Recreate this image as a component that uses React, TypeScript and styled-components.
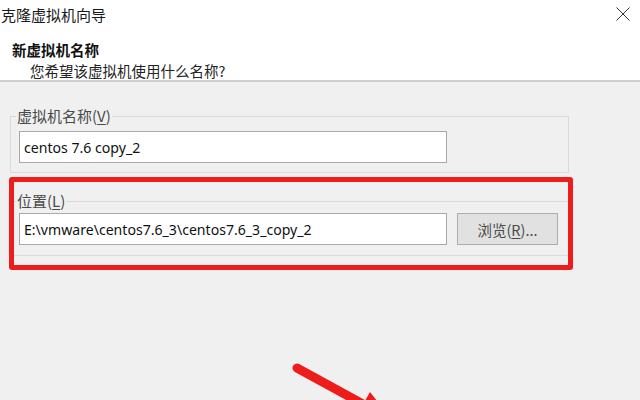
import React from "react";
import styled, { createGlobalStyle } from "styled-components";

const Global = createGlobalStyle`
  html, body { margin: 0; padding: 0; background: #f0f0f0; }
  body { font-family: "Noto Sans", "Noto Sans CJK SC", sans-serif; }
`;

const Window = styled.div`
  position: relative;
  width: 640px;
  height: 400px;
  overflow: hidden;
  background: #f0f0f0;
  display: flex;
  flex-direction: column;
`;

const TitleBar = styled.div`
  height: 30px;
  flex: none;
  background: #fff;
  display: flex;
  align-items: center;
  justify-content: space-between;
  padding: 0 10px 0 1px;
  box-sizing: border-box;
`;

const Title = styled.span`
  font-family: "Noto Sans CJK SC", sans-serif;
  font-size: 15px;
  color: #1a1a1a;
  line-height: 20px;
`;

const CloseButton = styled.svg`
  width: 14px;
  height: 14px;
  margin-top: -2px;
`;

const Header = styled.div`
  height: 40px;
  flex: none;
  background: #fff;
  border-bottom: 2px solid #cfcfcf;
  padding: 10px 0 0 12px;
  box-sizing: content-box;
  display: flex;
  flex-direction: column;
`;

const Heading = styled.div`
  font-family: "Noto Sans CJK SC", sans-serif;
  font-weight: 700;
  font-size: 14.5px;
  line-height: 20px;
  color: #111;
`;

const Subtitle = styled.div`
  font-family: "Noto Sans CJK SC", sans-serif;
  font-size: 14.5px;
  line-height: 20px;
  color: #222;
  padding-left: 18px;
  margin-top: 1px;
`;

const Body = styled.div`
  flex: 1;
  display: flex;
  flex-direction: column;
  padding-left: 10px;
`;

const Group = styled.fieldset<{ $top: number; $padTop: number; $padBottom: number }>`
  margin: ${(p) => p.$top}px 0 0 0;
  width: 559px;
  box-sizing: border-box;
  border: 1px solid #dadada;
  padding: ${(p) => p.$padTop}px 8px ${(p) => p.$padBottom}px 8px;
  min-width: 0;
`;

const Legend = styled.legend`
  font-family: "Noto Sans CJK SC", sans-serif;
  font-size: 15px;
  line-height: 18px;
  color: #4a4a4a;
  padding: 0 1px;
  margin-left: -3px;
`;

const Key = styled.span`
  text-decoration: underline;
  text-underline-offset: 2px;
`;

const Row = styled.div`
  display: flex;
  align-items: center;
  gap: 10px;
`;

const TextBox = styled.div`
  width: 428px;
  height: 32px;
  box-sizing: border-box;
  background: #fff;
  border: 1px solid #a9a9a9;
  padding: 0 4px;
  display: flex;
  align-items: center;
  font-family: "Noto Sans", sans-serif;
  font-size: 14.1px;
  color: #111;
  white-space: nowrap;
`;

const Button = styled.div`
  width: 101px;
  height: 32px;
  box-sizing: border-box;
  background: #e1e1e1;
  border: 1px solid #adadad;
  display: flex;
  align-items: center;
  justify-content: center;
  font-family: "Noto Sans CJK SC", sans-serif;
  font-size: 14.5px;
  color: #4a4a4a;
`;

const Highlight = styled.div`
  position: absolute;
  left: 9px;
  top: 177px;
  width: 564px;
  height: 93px;
  box-sizing: border-box;
  border: 5px solid #ec1d1b;
  border-radius: 3px;
  pointer-events: none;
`;

const Arrow = styled.svg`
  position: absolute;
  left: 0;
  top: 0;
  width: 640px;
  height: 400px;
  pointer-events: none;
`;

export default function App() {
  return (
    <>
      <Global />
      <Window>
        <TitleBar>
          <Title>克隆虚拟机向导</Title>
          <CloseButton viewBox="0 0 14 14">
            <path d="M0.5 0.5 L13.5 13.5 M13.5 0.5 L0.5 13.5" stroke="#333" strokeWidth="1" fill="none" />
          </CloseButton>
        </TitleBar>
        <Header>
          <Heading>新虚拟机名称</Heading>
          <Subtitle>您希望该虚拟机使用什么名称?</Subtitle>
        </Header>
        <Body>
          <Group $top={25} $padTop={6} $padBottom={9}>
            <Legend>
              虚拟机名称(<Key>V</Key>)
            </Legend>
            <Row>
              <TextBox>centos 7.6 copy_2</TextBox>
            </Row>
          </Group>
          <Group $top={19} $padTop={3} $padBottom={10}>
            <Legend>
              位置(<Key>L</Key>)
            </Legend>
            <Row>
              <TextBox>E:\vmware\centos7.6_3\centos7.6_3_copy_2</TextBox>
              <Button>
                浏览(<Key>R</Key>)...
              </Button>
            </Row>
          </Group>
        </Body>
        <Highlight />
        <Arrow viewBox="0 0 640 400">
          <line x1="297" y1="368" x2="372" y2="409" stroke="#ec1d1b" strokeWidth="9" strokeLinecap="round" />
          <polygon points="370,392 392,420 352,424" fill="#ec1d1b" />
        </Arrow>
      </Window>
    </>
  );
}
